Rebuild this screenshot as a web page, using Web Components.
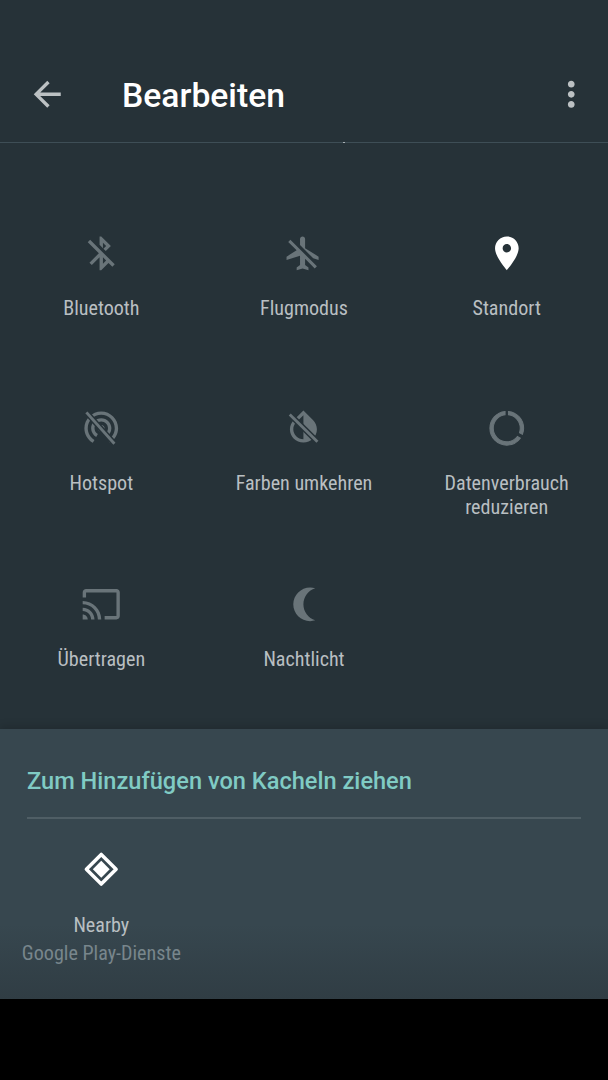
<!DOCTYPE html>
<html lang="de">
<head>
<meta charset="utf-8">
<title>Bearbeiten</title>
<style>
  html, body { margin: 0; height: 100%; background: #000; }
  body { font-family: Roboto, "Liberation Sans", sans-serif; }
</style>
</head>
<body>
<qs-page>
  <qs-header slot="header" title="Bearbeiten"></qs-header>
  <qs-grid slot="active">
    <qs-tile icon="bluetooth" label="Bluetooth"></qs-tile>
    <qs-tile icon="plane" label="Flugmodus"></qs-tile>
    <qs-tile icon="place" label="Standort" on></qs-tile>
    <qs-tile icon="hotspot" label="Hotspot"></qs-tile>
    <qs-tile icon="invert" label="Farben umkehren"></qs-tile>
    <qs-tile icon="saver" label="Datenverbrauch|reduzieren"></qs-tile>
    <qs-tile icon="cast" label="Übertragen"></qs-tile>
    <qs-tile icon="moon" label="Nachtlicht"></qs-tile>
  </qs-grid>
  <qs-drawer slot="drawer" heading="Zum Hinzufügen von Kacheln ziehen">
    <qs-tile icon="nearby" label="Nearby" sub="Google Play-Dienste" on></qs-tile>
  </qs-drawer>
</qs-page>

<script>
const BG = '#263238';

// all drawn on the 24 unit material grid
const ICONS = {
  back: '<path d="M20 11H7.83l5.59-5.59L12 4l-8 8 8 8 1.41-1.41L7.83 13H20v-2z"/>',
  more: '<path d="M12 8c1.1 0 2-.9 2-2s-.9-2-2-2-2 .9-2 2 .9 2 2 2zm0 2c-1.1 0-2 .9-2 2s.9 2 2 2 2-.9 2-2-.9-2-2-2zm0 6c-1.1 0-2 .9-2 2s.9 2 2 2 2-.9 2-2-.9-2-2-2z"/>',
  bluetooth: '<path d="M13 5.83l1.88 1.88-1.6 1.6 1.41 1.41 3.02-3.02L12 2h-1v5.03l2 2v-3.2zM5.41 4L4 5.41 10.59 12 5 17.59 6.41 19 11 14.41V22h1l4.29-4.29 2.3 2.29L20 18.59 5.41 4zM13 18.17v-3.76l1.88 1.88L13 18.17z"/>',
  plane: '<path transform="translate(-.5 0)" d="M13 9V3.5c0-.83-.67-1.5-1.5-1.5S10 2.67 10 3.5v3.68l7.83 7.83L21 16v-2l-8-5zM3 5.27l4.99 4.99L2 14v2l8-2.5V19l-2 1.5V22l3.5-1 3.5 1v-1.5L13 19v-3.73L18.73 21 20 19.73 4.27 4 3 5.27z"/>',
  place: '<path transform="translate(.35 0)" d="M12 2C8.13 2 5 5.13 5 9c0 5.25 7 13 7 13s7-7.75 7-13c0-3.87-3.13-7-7-7zm0 9.5c-1.38 0-2.5-1.12-2.5-2.5s1.12-2.5 2.5-2.5 2.5 1.12 2.5 2.5-1.12 2.5-2.5 2.5z"/>',
  hotspot: `<path d="M12 11c-1.1 0-2 .9-2 2 0 .55.23 1.05.59 1.41.36.36.86.59 1.41.59s1.05-.23 1.41-.59c.36-.36.59-.86.59-1.41 0-1.1-.9-2-2-2zm6 2c0-3.31-2.69-6-6-6s-6 2.69-6 6c0 2.22 1.21 4.15 3 5.19l1-1.74c-1.19-.7-2-1.97-2-3.45 0-2.21 1.79-4 4-4s4 1.79 4 4c0 1.48-.81 2.75-2 3.45l1 1.74c1.79-1.04 3-2.97 3-5.19zM12 3C6.48 3 2 7.48 2 13c0 3.7 2.01 6.92 4.99 8.65l1-1.73C5.61 18.53 4 15.96 4 13c0-4.42 3.58-8 8-8s8 3.58 8 8c0 2.96-1.61 5.53-4 6.92l1 1.73c2.99-1.73 5-4.95 5-8.65 0-5.52-4.48-10-10-10z" transform="translate(0 -1)"/>
    <path d="M3.2 2.6L19.8 21.2" stroke="${BG}" stroke-width="3.4" fill="none"/>
    <path d="M3.2 2.6L19.8 21.2" stroke="currentColor" stroke-width="1.7" fill="none"/>`,
  invert: `<path transform="translate(-.5 -.5)" d="M12 4.81V19c-3.31 0-6-2.63-6-5.87 0-1.56.62-3.03 1.75-4.14L12 4.81M6.35 7.56C4.9 8.99 4 10.96 4 13.13 4 17.48 7.58 21 12 21s8-3.52 8-7.87c0-2.17-.9-4.14-2.35-5.57L12 2 6.35 7.56z"/>
    <path d="M3.4 3.8L19.8 20" stroke="${BG}" stroke-width="3.4" fill="none"/>
    <path d="M3.4 3.8L19.8 20" stroke="currentColor" stroke-width="1.7" fill="none"/>`,
  saver: '<path transform="translate(.3 0)" stroke="currentColor" stroke-width=".6" d="M13 2.05v2.02C16.95 4.56 20 7.92 20 12c0 .9-.15 1.79-.44 2.64l1.73 1C21.74 14.5 22 13.26 22 12c0-5.18-3.95-9.45-9-9.95zM12 20c-4.42 0-8-3.58-8-8 0-4.08 3.05-7.44 7-7.93V2.05C5.94 2.55 2 6.81 2 12c0 5.52 4.47 10 9.99 10 3.3 0 6.23-1.61 8.05-4.09l-1.74-1.01A7.96 7.96 0 0112 20z"/>',
  cast: '<path d="M21 3H3c-1.1 0-2 .9-2 2v3h2V5h18v14h-7v2h7c1.1 0 2-.9 2-2V5c0-1.1-.9-2-2-2zM1 18v3h3c0-1.66-1.34-3-3-3zm0-4v2c2.76 0 5 2.24 5 5h2c0-3.87-3.13-7-7-7zm0-4v2c4.97 0 9 4.03 9 9h2c0-6.08-4.93-11-11-11z"/>',
  moon: '<path transform="matrix(-1 0 0 1 24.5 0)" d="M9 2c-1.05 0-2.05.16-3 .46 4.06 1.27 7 5.06 7 9.54 0 4.48-2.94 8.27-7 9.54.95.3 1.95.46 3 .46 5.52 0 10-4.48 10-10S14.52 2 9 2z"/>',
  nearby: '<path d="M12 3.2L20.8 12 12 20.8 3.2 12z" fill="none" stroke="currentColor" stroke-width="2.1" stroke-linejoin="round"/><path d="M12 7L17 12 12 17 7 12z"/>'
};

class QsIcon extends HTMLElement {
  constructor() {
    super();
    this.attachShadow({ mode: 'open' });
  }

  connectedCallback() {
    const size = this.getAttribute('size') || '40.5';
    this.shadowRoot.innerHTML = `
      <style>
        :host { display: block; width: ${size}px; height: ${size}px; }
        svg { display: block; width: 100%; height: 100%; fill: currentColor; }
      </style>
      <svg viewBox="0 0 24 24">${ICONS[this.getAttribute('name')]}</svg>`;
  }
}

class QsHeader extends HTMLElement {
  constructor() {
    super();
    this.attachShadow({ mode: 'open' });
  }

  connectedCallback() {
    this.shadowRoot.innerHTML = `
      <style>
        :host {
          display: flex;
          align-items: center;
          position: relative;
          box-sizing: border-box;
          height: 143px;
          padding: 46px 17px 0 27px;
          color: #fff;
          border-bottom: 1px solid #3e4e56;
        }
        qs-icon { color: #bcc1c3; flex: none; }
        h1 {
          flex: 1;
          margin: 4px 0 0 54.5px;
          font: 500 33.7px/40px Roboto, sans-serif;
        }
        .tick {
          position: absolute;
          left: 343px;
          bottom: -1px;
          width: 2px;
          height: 1px;
          background: #a9b1b5;
        }
      </style>
      <qs-icon name="back"></qs-icon>
      <h1>${this.getAttribute('title')}</h1>
      <qs-icon name="more"></qs-icon>
      <span class="tick"></span>`;
  }
}

class QsTile extends HTMLElement {
  constructor() {
    super();
    this.attachShadow({ mode: 'open' });
  }

  connectedCallback() {
    const label = this.getAttribute('label').split('|').join('<br>');
    const sub = this.getAttribute('sub');
    this.shadowRoot.innerHTML = `
      <style>
        :host {
          display: flex;
          flex-direction: column;
          align-items: center;
          color: #697479;
          font: 400 20.1px/24px "Roboto Condensed", Roboto, sans-serif;
        }
        :host([on]) { color: #fff; }
        .label {
          margin-top: var(--label-gap, 22.7px);
          color: #b9bfc2;
          text-align: center;
          white-space: nowrap;
        }
        .sub {
          display: block;
          margin-top: 4px;
          color: #78868c;
        }
      </style>
      <qs-icon name="${this.getAttribute('icon')}"></qs-icon>
      <span class="label">${label}${sub ? `<span class="sub">${sub}</span>` : ''}</span>`;
  }
}

class QsGrid extends HTMLElement {
  constructor() {
    super();
    this.attachShadow({ mode: 'open' });
    this.shadowRoot.innerHTML = `
      <style>
        :host {
          display: grid;
          grid-template-columns: repeat(3, minmax(0, 1fr));
          grid-auto-rows: 175.6px;
          box-sizing: border-box;
          height: 586px;
          padding-top: 89.6px;
          background: ${BG};
        }
      </style>
      <slot></slot>`;
  }
}

class QsDrawer extends HTMLElement {
  constructor() {
    super();
    this.attachShadow({ mode: 'open' });
  }

  connectedCallback() {
    this.shadowRoot.innerHTML = `
      <style>
        :host {
          --label-gap: 23.5px;
          display: block;
          box-sizing: border-box;
          height: 270px;
          padding: 0 27px;
          background: linear-gradient(#37474f 0, #37474f 195px, #303d44 270px);
          box-shadow: 0 -3px 8px rgba(0, 0, 0, .14);
        }
        h2 {
          margin: 0;
          padding: 37px 0 21px;
          border-bottom: 2px solid #4f5e65;
          color: #80cbc4;
          font: 500 23.6px/30px Roboto, sans-serif;
        }
        .row {
          display: grid;
          grid-template-columns: repeat(3, minmax(0, 1fr));
          margin: 29.5px -27px 0;
        }
      </style>
      <h2>${this.getAttribute('heading')}</h2>
      <div class="row"><slot></slot></div>`;
  }
}

class QsPage extends HTMLElement {
  constructor() {
    super();
    this.attachShadow({ mode: 'open' });
    this.shadowRoot.innerHTML = `
      <style>
        :host {
          display: flex;
          flex-direction: column;
          height: 1080px;
          background: #000;
        }
        ::slotted(qs-header) { background: ${BG}; }
      </style>
      <slot name="header"></slot>
      <slot name="active"></slot>
      <slot name="drawer"></slot>`;
  }
}

customElements.define('qs-icon', QsIcon);
customElements.define('qs-tile', QsTile);
customElements.define('qs-header', QsHeader);
customElements.define('qs-grid', QsGrid);
customElements.define('qs-drawer', QsDrawer);
customElements.define('qs-page', QsPage);
</script>
</body>
</html>
